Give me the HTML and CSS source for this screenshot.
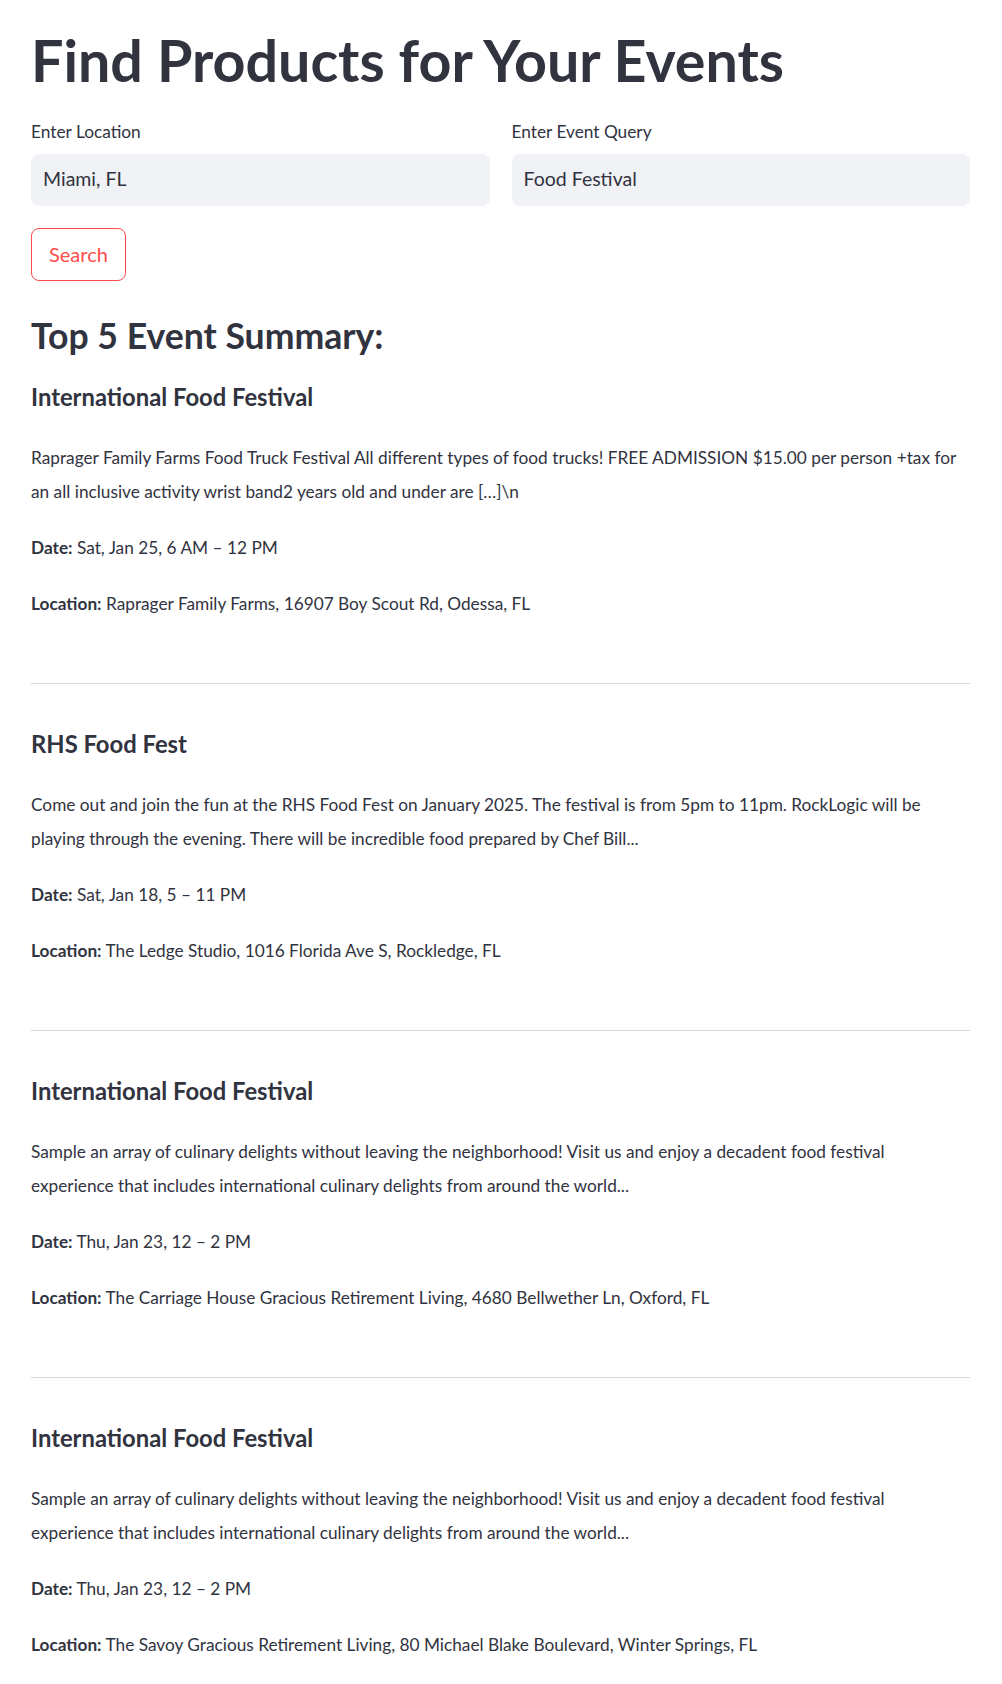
FILE: index.html
```html
<!DOCTYPE html>
<html lang="en">
<head>
<meta charset="utf-8">
<title>Find Products for Your Events</title>
<link rel="stylesheet" href="styles.css">
</head>
<body>
<main class="page">
  <h1 class="title">Find Products for Your Events</h1>

  <div class="inputs">
    <label class="field">
      <span class="field-label">Enter Location</span>
      <input class="field-input" type="text" value="Miami, FL">
    </label>
    <label class="field">
      <span class="field-label">Enter Event Query</span>
      <input class="field-input" type="text" value="Food Festival">
    </label>
  </div>

  <button class="search-btn" type="button">Search</button>

  <h2 class="summary-title">Top 5 Event Summary:</h2>

  <section class="event">
    <h3 class="event-name">International Food Festival</h3>
    <p class="event-desc">Raprager Family Farms Food Truck Festival All different types of food trucks! FREE ADMISSION $15.00 per person +tax for an all inclusive activity wrist band2 years old and under are […]\n</p>
    <p class="event-meta"><strong>Date:</strong> Sat, Jan 25, 6 AM – 12 PM</p>
    <p class="event-meta"><strong>Location:</strong> Raprager Family Farms, 16907 Boy Scout Rd, Odessa, FL</p>
  </section>
  <hr class="divider">

  <section class="event">
    <h3 class="event-name">RHS Food Fest</h3>
    <p class="event-desc">Come out and join the fun at the RHS Food Fest on January 2025. The festival is from 5pm to 11pm. RockLogic will be playing through the evening. There will be incredible food prepared by Chef Bill...</p>
    <p class="event-meta"><strong>Date:</strong> Sat, Jan 18, 5 – 11 PM</p>
    <p class="event-meta"><strong>Location:</strong> The Ledge Studio, 1016 Florida Ave S, Rockledge, FL</p>
  </section>
  <hr class="divider">

  <section class="event">
    <h3 class="event-name">International Food Festival</h3>
    <p class="event-desc">Sample an array of culinary delights without leaving the neighborhood! Visit us and enjoy a decadent food festival experience that includes international culinary delights from around the world...</p>
    <p class="event-meta"><strong>Date:</strong> Thu, Jan 23, 12 – 2 PM</p>
    <p class="event-meta"><strong>Location:</strong> The Carriage House Gracious Retirement Living, 4680 Bellwether Ln, Oxford, FL</p>
  </section>
  <hr class="divider">

  <section class="event">
    <h3 class="event-name">International Food Festival</h3>
    <p class="event-desc">Sample an array of culinary delights without leaving the neighborhood! Visit us and enjoy a decadent food festival experience that includes international culinary delights from around the world...</p>
    <p class="event-meta"><strong>Date:</strong> Thu, Jan 23, 12 – 2 PM</p>
    <p class="event-meta"><strong>Location:</strong> The Savoy Gracious Retirement Living, 80 Michael Blake Boulevard, Winter Springs, FL</p>
  </section>
</main>
</body>
</html>
```

FILE: styles.css
```css
html, body {
  margin: 0;
  padding: 0;
  background: #ffffff;
  overflow: hidden;
}

body {
  font-family: Lato, "Noto Sans", "Liberation Sans", sans-serif;
  color: #31333f;
}

.page {
  padding: 25px 32px 0 31px;
  display: flex;
  flex-direction: column;
  align-items: stretch;
}

.title {
  margin: 0;
  font-size: 57.4px;
  line-height: 69px;
  font-weight: 700;
}

.inputs {
  margin-top: 27px;
  display: grid;
  grid-template-columns: 1fr 1fr;
  column-gap: 22px;
}

.field {
  display: flex;
  flex-direction: column;
}

.field-label {
  font-size: 17.3px;
  line-height: 22px;
  margin-bottom: 10.5px;
}

.field-input {
  box-sizing: border-box;
  height: 52px;
  width: 100%;
  border: 1px solid #f0f2f6;
  border-radius: 8px;
  background: #f0f2f6;
  padding: 0 11px 2px 11px;
  font-family: inherit;
  font-size: 19.5px;
  color: #31333f;
  outline: none;
}

.search-btn {
  align-self: flex-start;
  margin-top: 22px;
  box-sizing: border-box;
  height: 53px;
  padding: 0 17px;
  border: 1px solid #ff4b4b;
  border-radius: 8px;
  background: #ffffff;
  color: #ff4b4b;
  font-family: inherit;
  font-size: 20px;
  line-height: 24px;
}

.summary-title {
  margin: 33px 0 0 0;
  font-size: 35.6px;
  line-height: 43px;
  font-weight: 700;
}

.event-name {
  margin: 26px 0 0 0;
  font-size: 23.8px;
  line-height: 29px;
  font-weight: 700;
}

.event-desc,
.event-meta {
  margin: 22px 0 0 0;
  font-size: 17.25px;
  line-height: 34px;
}

.event-desc {
  margin-top: 29.4px;
}

.event-meta strong {
  font-weight: 700;
}

.divider {
  margin: 62.2px 0 0 0;
  border: 0;
  height: 1px;
  background: #d6d6d9;
}

.divider + .event .event-name {
  margin-top: 45.5px;
}
```
